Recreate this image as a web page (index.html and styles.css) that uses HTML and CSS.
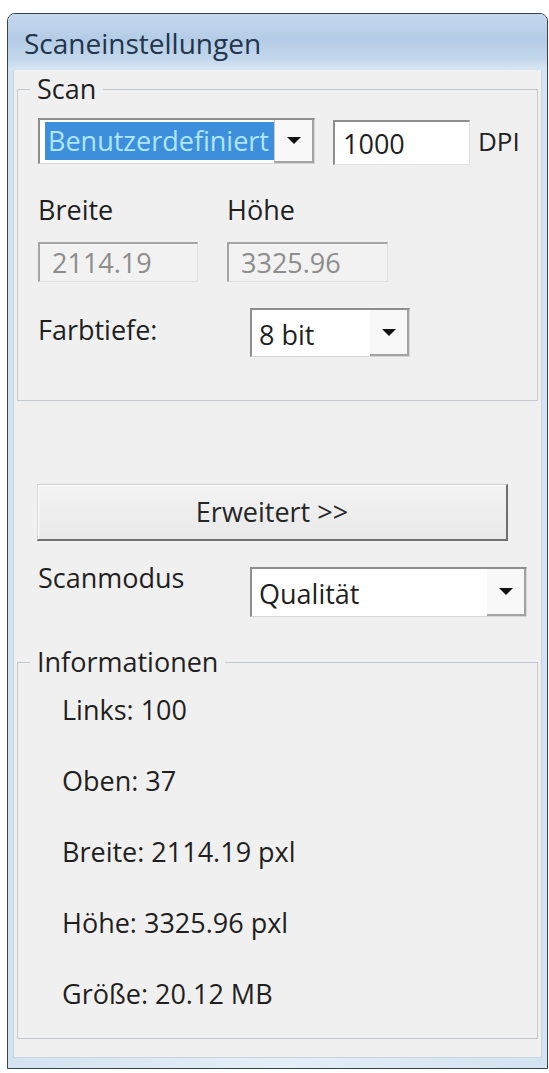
FILE: index.html
```html
<!DOCTYPE html>
<html lang="de">
<head>
<meta charset="utf-8">
<title>Scaneinstellungen</title>
<link rel="stylesheet" href="styles.css">
</head>
<body>
<div class="window">
  <div class="titlebar">Scaneinstellungen</div>
  <div class="client">
    <fieldset class="group group-scan">
      <legend>Scan</legend>
      <div class="row row-preset">
        <div class="combo combo-preset">
          <span class="combo-value selected">Benutzerdefiniert</span>
          <span class="combo-btn"><svg width="14" height="7" viewBox="0 0 14 7"><path d="M0 0H14L7 7Z" fill="#111"/></svg></span>
        </div>
        <div class="field field-dpi">1000</div>
        <span class="unit">DPI</span>
      </div>
      <div class="row row-labels">
        <span class="lbl lbl-w">Breite</span>
        <span class="lbl">Höhe</span>
      </div>
      <div class="row row-dims">
        <div class="field disabled dim-w">2114.19</div>
        <div class="field disabled dim-h">3325.96</div>
      </div>
      <div class="row row-depth">
        <span class="lbl lbl-col">Farbtiefe:</span>
        <div class="combo combo-depth">
          <span class="combo-value">8 bit</span>
          <span class="combo-btn"><svg width="14" height="7" viewBox="0 0 14 7"><path d="M0 0H14L7 7Z" fill="#111"/></svg></span>
        </div>
      </div>
    </fieldset>

    <div class="btn">Erweitert &gt;&gt;</div>

    <div class="row row-mode">
      <span class="lbl lbl-col">Scanmodus</span>
      <div class="combo combo-mode">
        <span class="combo-value">Qualität</span>
        <span class="combo-btn"><svg width="14" height="7" viewBox="0 0 14 7"><path d="M0 0H14L7 7Z" fill="#111"/></svg></span>
      </div>
    </div>

    <fieldset class="group group-info">
      <legend>Informationen</legend>
      <ul class="info">
        <li>Links: 100</li>
        <li>Oben: 37</li>
        <li>Breite: 2114.19 pxl</li>
        <li>Höhe: 3325.96 pxl</li>
        <li>Größe: 20.12 MB</li>
      </ul>
    </fieldset>
  </div>
</div>
</body>
</html>
```

FILE: styles.css
```css
html, body {
  margin: 0;
  background: #ffffff;
}

body {
  font-family: "Open Sans", "Noto Sans", sans-serif;
  font-size: 27px;
  line-height: 36px;
  color: #1f1f1f;
}

.window {
  margin: 13px 0 0 7px;
  width: 541px;
  height: 1056px;
  box-sizing: border-box;
  border: 1px solid #38434c;
  border-radius: 8px 8px 0 0;
  background: linear-gradient(90deg, #d3e3f1, #e4eef7 50%, #d3e3f1);
  display: flex;
  flex-direction: column;
  overflow: hidden;
}

.titlebar {
  flex: none;
  height: 56px;
  box-sizing: border-box;
  padding: 11px 0 0 16px;
  font-size: 28px;
  line-height: 36px;
  color: #22354b;
  background: linear-gradient(#c4d8ed, #b4cce6 45%, #c3d7ec 80%, #d8e6f3);
}

.client {
  flex: 1;
  margin: 0 5px 10px 5px;
  padding: 5px 4px 0 4px;
  background: #f0f0f0;
  box-shadow: inset 1px 0 0 #c9d4de, inset -1px 0 0 #c9d4de, inset 0 -1px 0 #c9d4de;
}

.group {
  margin: 0;
  width: 521px;
  box-sizing: border-box;
  min-width: 0;
  border: 1px solid #c4cacf;
  padding: 0 0 0 20px;
}

.group legend {
  font-size: 27px;
  line-height: 28px;
  padding: 0 7px;
  margin-left: -8px;
  color: #1f1f1f;
}

.group-scan {
  padding-bottom: 43px;
}

.row {
  display: flex;
  align-items: flex-start;
}

.row-preset {
  margin-top: 15px;
}

.combo {
  display: flex;
  box-sizing: border-box;
  background: #ffffff;
  border-top: 2px solid #8e8e8e;
  border-left: 2px solid #8e8e8e;
  border-right: 1px solid #d6d6d6;
  border-bottom: 1px solid #d6d6d6;
}

.combo-value {
  flex: 1;
  padding-left: 7px;
  white-space: nowrap;
  overflow: hidden;
}

.combo-btn {
  flex: none;
  width: 39px;
  box-sizing: border-box;
  display: flex;
  align-items: center;
  justify-content: center;
  background: #f8f8f8;
  border-right: 2px solid #a3a3a3;
  border-bottom: 2px solid #a3a3a3;
}

.combo-preset {
  width: 277px;
  height: 46px;
}

.combo-preset .combo-value {
  margin: 2px 0 3px 5px;
  padding-left: 3px;
  line-height: 38px;
  background: #3d8fdc;
  color: #aee6ff;
}

.combo-preset .combo-btn {
  width: 40px;
  border-left: 1px solid #c8c8c8;
}

.field {
  box-sizing: border-box;
  background: #ffffff;
  border-top: 2px solid #8e8e8e;
  border-left: 2px solid #8e8e8e;
  border-right: 1px solid #e0e0e0;
  border-bottom: 1px solid #e0e0e0;
  padding-left: 8px;
}

.field-dpi {
  margin: 2px 0 0 18px;
  width: 137px;
  height: 45px;
  line-height: 44px;
}

.unit {
  margin: 5px 0 0 8px;
  font-size: 26px;
}

.row-labels {
  margin-top: 27px;
}

.lbl-w {
  width: 189px;
}

.row-dims {
  margin-top: 14px;
}

.field.disabled {
  height: 40px;
  line-height: 37px;
  padding-left: 12px;
  background: #f2f2f2;
  color: #8d8d8d;
  border-top-color: #a5a5a5;
  border-left-color: #a5a5a5;
}

.dim-w {
  width: 160px;
}

.dim-h {
  width: 161px;
  margin-left: 29px;
}

.row-depth {
  margin-top: 26px;
}

.lbl-col {
  flex: none;
  width: 212px;
  margin-top: 4px;
}

.combo-depth {
  width: 160px;
  height: 49px;
}

.combo-depth .combo-value,
.combo-mode .combo-value {
  line-height: 50px;
}

.btn {
  margin: 83px 0 0 20px;
  width: 471px;
  height: 57px;
  box-sizing: border-box;
  text-align: center;
  line-height: 54px;
  color: #262626;
  background: linear-gradient(#f3f3f3, #e9e9e9);
  border-top: 1px solid #d0d0d0;
  border-left: 1px solid #d8d8d8;
  border-right: 2px solid #6f6f6f;
  border-bottom: 2px solid #6f6f6f;
  box-shadow: inset 1px 1px 0 #ffffff;
}

.row-mode {
  margin: 19px 0 0 21px;
}

.row-mode .lbl-col {
  margin-top: 0;
}

.combo-mode {
  margin-top: 7px;
  width: 277px;
  height: 50px;
}

.group-info {
  margin-top: 31px;
  padding-bottom: 26px;
}

.info {
  list-style: none;
  margin: 16px 0 0 0;
  padding: 0 0 0 24px;
  display: flex;
  flex-direction: column;
  gap: 35px;
}

.info li {
  line-height: 36px;
}
```
